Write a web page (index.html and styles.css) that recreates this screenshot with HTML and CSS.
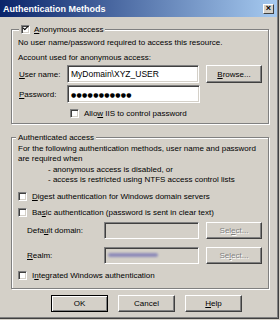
FILE: index.html
```html
<!DOCTYPE html>
<html lang="en">
<head>
    <meta charset="UTF-8">
    <title>Authentication Methods</title>
    <link rel="stylesheet" href="styles.css">
</head>
<body>
<div class="window">
    <div class="titlebar">
        <span class="title">Authentication Methods</span>
        <span class="close">&#215;</span>
    </div>

    <div class="group group-anon">
        <div class="legend"><span class="check checked"></span><span><u>A</u>nonymous access</span></div>
        <p class="line">No user name/password required to access this resource.</p>
        <p class="line line-2">Account used for anonymous access:</p>
        <div class="field-row row-user">
            <span class="lbl"><u>U</u>ser name:</span>
            <div class="input wide">MyDomain\XYZ_USER</div>
            <div class="btn"><u>B</u>rowse...</div>
        </div>
        <div class="field-row row-pass">
            <span class="lbl"><u>P</u>assword:</span>
            <div class="input wide dots">&#9679;&#9679;&#9679;&#9679;&#9679;&#9679;&#9679;&#9679;&#9679;&#9679;&#9679;</div>
        </div>
        <div class="check-row row-allow">
            <span class="check"></span><span>Allo<u>w</u> IIS to control password</span>
        </div>
    </div>

    <div class="group group-auth">
        <div class="legend plain">Authenticated access</div>
        <p class="para">For the following authentication methods, user name and password<br>are required when<br>
            <span class="indent">- anonymous access is disabled, or</span><br>
            <span class="indent">- access is restricted using NTFS access control lists</span></p>
        <div class="check-row row-digest">
            <span class="check"></span><span><u>D</u>igest authentication for Windows domain servers</span>
        </div>
        <div class="check-row row-basic">
            <span class="check"></span><span>Ba<u>s</u>ic authentication (password is sent in clear text)</span>
        </div>
        <div class="field-row row-domain">
            <span class="lbl lbl-sub">Defa<u>u</u>lt domain:</span>
            <div class="input narrow disabled"></div>
            <div class="btn disabled">Sel<u>e</u>ct...</div>
        </div>
        <div class="field-row row-realm">
            <span class="lbl lbl-sub"><u>R</u>ealm:</span>
            <div class="input narrow disabled"><span class="smudge"></span></div>
            <div class="btn disabled">Se<u>l</u>ect...</div>
        </div>
        <div class="check-row row-iwa">
            <span class="check"></span><span>I<u>n</u>tegrated Windows authentication</span>
        </div>
    </div>

    <div class="buttons">
        <div class="btn default">OK</div>
        <div class="btn">Cancel</div>
        <div class="btn"><u>H</u>elp</div>
    </div>
</div>
</body>
</html>
```

FILE: styles.css
```css
body {
    margin: 0;
    font-family: "Liberation Sans", Arial, sans-serif;
    font-size: 8px;
    color: #000;
    background: #d4d0c8;
}

u {
    text-decoration: underline;
    text-underline-offset: 1px;
}

.window {
    width: 278px;
    height: 318px;
    background: #d4d0c8;
    border-right: 1px solid #404040;
    border-bottom: 1px solid #404040;
    box-shadow: inset -1px -1px 0 #808080;
    display: flex;
    flex-direction: column;
    overflow: hidden;
}

.titlebar {
    height: 17px;
    flex: none;
    margin-right: 1px;
    background: linear-gradient(to right, #0a246a, #a6caf0);
    display: flex;
    align-items: center;
    justify-content: space-between;
    padding: 0 3px 0 3px;
}

.title {
    color: #fff;
    font-weight: bold;
    font-size: 9px;
}

.close {
    width: 11px;
    height: 10px;
    background: #d4d0c8;
    border-top: 1px solid #fff;
    border-left: 1px solid #fff;
    border-right: 1px solid #404040;
    border-bottom: 1px solid #404040;
    box-sizing: border-box;
    font-size: 9px;
    line-height: 7px;
    text-align: center;
    font-weight: bold;
}

.group {
    position: relative;
    margin: 0 9px 0 11px;
    border: 1px solid #808080;
    box-shadow: inset 1px 1px 0 #fff, 1px 1px 0 #fff;
    padding: 0 6px;
}

.group-anon {
    margin-top: 12px;
    height: 93px;
    padding-top: 7px;
    box-sizing: border-box;
    height: 95px;
}

.group-auth {
    margin-top: 13px;
    height: 152px;
    padding-top: 6px;
    box-sizing: border-box;
}

.legend {
    position: absolute;
    top: -6px;
    left: 7px;
    padding: 0 2px;
    background: #d4d0c8;
    display: flex;
    align-items: center;
    gap: 4px;
    line-height: 11px;
}

.legend.plain {
    left: 4px;
}

.line {
    margin: 0;
    line-height: 11px;
    white-space: nowrap;
}

.line-2 {
    margin-top: 4px;
}

.para {
    margin: 0;
    line-height: 10.4px;
    white-space: nowrap;
}

.indent {
    padding-left: 30px;
}

.field-row {
    display: flex;
    align-items: center;
}

.row-user {
    margin-top: 2px;
}

.row-pass {
    margin-top: 2px;
}

.lbl {
    width: 49px;
    flex: none;
    padding-left: 1px;
    box-sizing: border-box;
}

.lbl-sub {
    width: 86px;
    padding-left: 9px;
}

.input {
    height: 18px;
    box-sizing: border-box;
    background: #fff;
    border: 1px solid;
    border-color: #808080 #fff #fff #808080;
    box-shadow: inset 1px 1px 0 #404040, inset -1px -1px 0 #d4d0c8;
    padding: 0 3px;
    display: flex;
    align-items: center;
    white-space: nowrap;
    overflow: hidden;
    font-size: 8.5px;
}

.input.wide {
    width: 133px;
}

.input.narrow {
    width: 96px;
    height: 17px;
}

.input.disabled {
    background: #d4d0c8;
}

.dots {
    font-family: "DejaVu Sans", sans-serif;
    font-size: 6px;
    letter-spacing: 0.3px;
}

.smudge {
    width: 50px;
    height: 4px;
    background: #8e8cb8;
    border-radius: 2px;
    filter: blur(0.8px);
}

.btn {
    width: 56px;
    height: 18px;
    flex: none;
    margin-left: 7px;
    box-sizing: border-box;
    background: #d4d0c8;
    border: 1px solid;
    border-color: #fff #404040 #404040 #fff;
    box-shadow: inset -1px -1px 0 #808080;
    display: flex;
    align-items: center;
    justify-content: center;
}

.btn.disabled {
    height: 17px;
    color: #808080;
    text-shadow: 1px 1px 0 #fff;
}

.check-row {
    display: flex;
    align-items: center;
    gap: 5px;
    line-height: 11px;
}

.check {
    width: 9px;
    height: 9px;
    flex: none;
    box-sizing: border-box;
    background: #fff;
    border: 1px solid;
    border-color: #808080 #fff #fff #808080;
    box-shadow: inset 1px 1px 0 #404040, inset -1px -1px 0 #d4d0c8;
    position: relative;
}

.check.checked::after {
    content: "";
    position: absolute;
    left: 1px;
    top: 0;
    width: 4px;
    height: 2px;
    border-left: 1.5px solid #000;
    border-bottom: 1.5px solid #000;
    transform: rotate(-45deg);
}

.row-allow {
    margin-top: 5px;
    padding-left: 52px;
}

.row-digest {
    margin-top: 5px;
}

.row-basic {
    margin-top: 5px;
}

.row-domain {
    margin-top: 4px;
}

.row-realm {
    margin-top: 8px;
}

.row-iwa {
    margin-top: 6px;
}

.buttons {
    display: flex;
    gap: 10px;
    margin: 6px 0 0 51px;
}

.buttons .btn {
    width: 57px;
    height: 17px;
    margin-left: 0;
}

.btn.default {
    border-color: #000;
    box-shadow: inset 1px 1px 0 #fff, inset -1px -1px 0 #808080;
}
```
